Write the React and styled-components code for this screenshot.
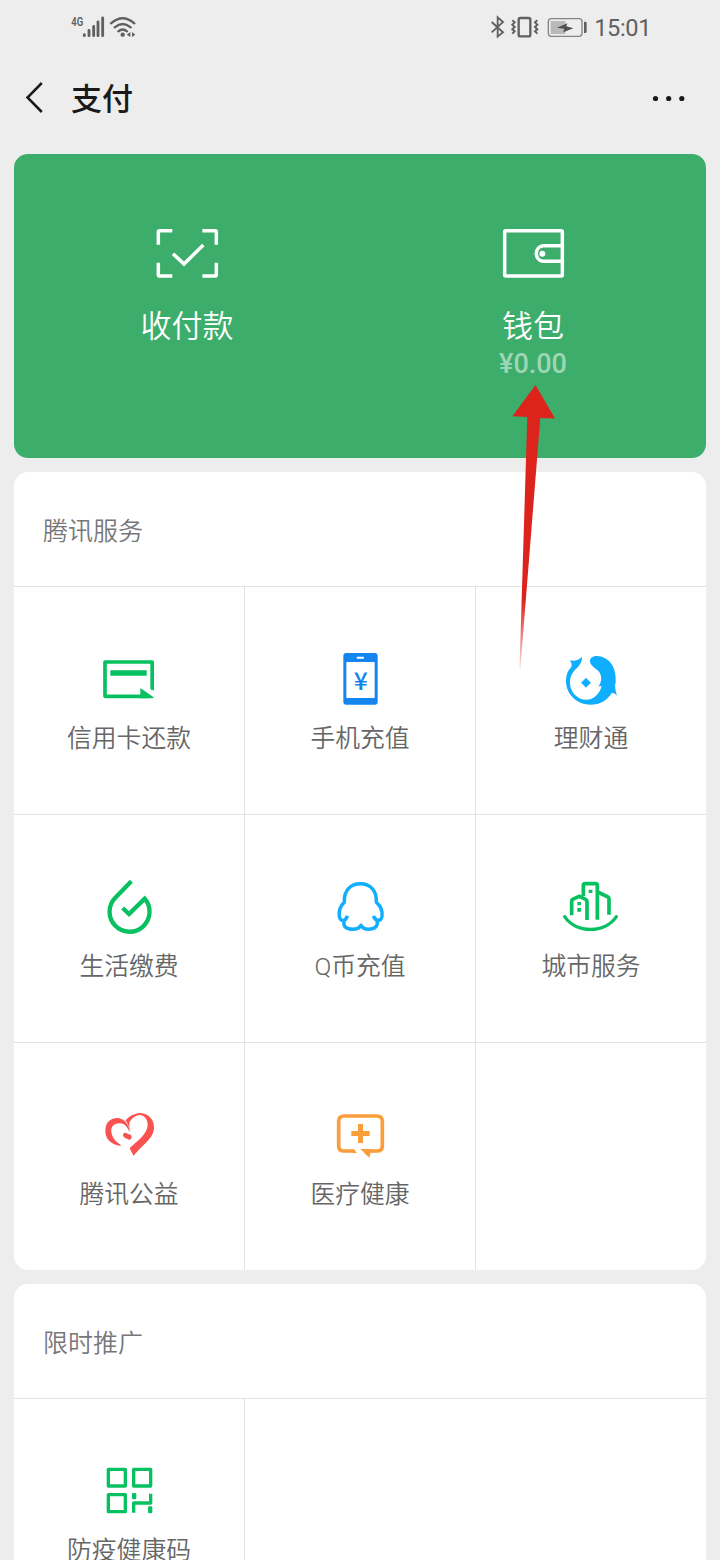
import React from "react";
import styled, { createGlobalStyle } from "styled-components";

const GlobalStyle = createGlobalStyle`
  * { box-sizing: border-box; }
  html, body { margin: 0; padding: 0; background: #ededed; }
  body { font-family: Roboto, "Noto Sans CJK SC", sans-serif; }
  svg { display: block; }
`;

const Screen = styled.div`
  position: relative;
  width: 720px;
  height: 1560px;
  overflow: hidden;
  background: #ededed;
`;

const StatusBar = styled.div`
  display: flex;
  align-items: center;
  justify-content: space-between;
  height: 56px;
  padding: 0 69px 0 70px;
  color: #606060;
`;

const StatusGroup = styled.div`
  display: flex;
  align-items: center;
`;

const Clock = styled.span`
  margin-left: 5px;
  font-size: 23.6px;
  line-height: 28px;
  letter-spacing: -0.4px;
`;

const NavBar = styled.header`
  display: flex;
  align-items: center;
  height: 84px;
  padding: 0 34px 0 24px;
`;

const Title = styled.h1`
  flex: 1;
  margin: 0 0 0 26px;
  padding-top: 3px;
  color: #191919;
  font-size: 31px;
  font-weight: 500;
  line-height: 40px;
`;

const Content = styled.main`
  display: flex;
  flex-direction: column;
  gap: 14px;
  padding: 14px 14px 0;
`;

const WalletPanel = styled.section`
  display: grid;
  grid-template-columns: 1fr 1fr;
  height: 304px;
  border-radius: 14px;
  background: #3dad6b;
`;

const WalletEntry = styled.div`
  display: flex;
  flex-direction: column;
  align-items: center;
  padding-top: 71px;
  color: #fff;
`;

const WalletLabel = styled.div`
  margin-top: 26px;
  font-size: 31px;
  font-weight: 350;
  line-height: 40px;
`;

const Amount = styled.div`
  margin-top: 0;
  color: #9ed6b5;
  font-size: 27px;
  font-weight: 500;
  line-height: 34px;
`;

const Card = styled.section`
  flex: none;
  overflow: hidden;
  border-radius: 14px;
  background: #fff;
`;

const CardTitle = styled.h2`
  display: flex;
  align-items: center;
  height: 115px;
  margin: 0;
  padding: 0 29px 1px;
  border-bottom: 1px solid #e3e3e3;
  color: #77777a;
  font-size: 25px;
  font-weight: 350;
`;

const Grid = styled.div`
  display: grid;
  grid-template-columns: 231px 231px 230px;
`;

const Cell = styled.div`
  display: flex;
  flex-direction: column;
  align-items: center;
  gap: 14px;
  height: ${(p) => (p.$bottom ? 228 : 227)}px;
  padding-top: 63px;
  border: 0 solid #e3e3e3;
  border-right-width: ${(p) => (p.$right ? 1 : 0)}px;
  border-bottom-width: ${(p) => (p.$bottom ? 1 : 0)}px;
`;

const CellLabel = styled.div`
  color: #666;
  font-size: 24.8px;
  font-weight: 350;
  line-height: 30px;
  white-space: nowrap;
`;

const Pointer = styled.svg`
  position: absolute;
  left: 505px;
  top: 380px;
`;

const GREEN = "#07c160";
const BLUE = "#10aeff";
const RED = "#fa5151";

const CellIcon = ({ box, children }) => (
  <svg width="60" height="60" viewBox={`${box} 180 180`} fill="none">
    {children}
  </svg>
);

const CreditCardIcon = () => (
  <CellIcon box="117 30">
    <path d="M276.500 151V66H135V169H262" stroke={GREEN} strokeWidth="11" strokeLinejoin="round" />
    <path d="M151 91H260V107H151ZM241 144L281 172L279 175H241Z" fill={GREEN} />
    <path d="M270 146L283 156V160L270 150Z" fill="#fff" />
  </CellIcon>
);

const PhoneIcon = () => (
  <CellIcon box="90 30">
    <rect x="130" y="39" width="103" height="155" rx="9" fill="#1485ee" />
    <rect x="139" y="66" width="85" height="108" fill="#fff" />
    <rect x="170" y="50" width="22" height="6" rx="2" fill="#fff" />
    <text x="182" y="150" textAnchor="middle" fontFamily="Noto Sans CJK SC" fontSize="74" fontWeight="500" fill="#1485ee">¥</text>
  </CellIcon>
);

const FundIcon = () => (
  <CellIcon box="783 30">
    <path
      d="M810 61Q831 66 846 50Q848 65 832 83C817 96 810 108 810 128C810 156 832 179 859 179C881 179 899 162 905 138L895 139C904 129 907 112 899 98C893 88 876 82 871 69C866 56 877 48 891 48C925 49 947 79 947 115Q948 126 945 137Q946 153 951 167Q944 158 936 158C922 181 899 194 872 194C832 194 798 164 798 123C798 104 804 91 814 81Q817 71 810 61Z"
      fill={BLUE}
    />
    <path d="M858 113Q865 121 873 128Q865 135 858 143Q851 135 843 128Q851 121 858 113Z" fill={BLUE} />
  </CellIcon>
);

const UtilitiesIcon = () => (
  <CellIcon box="117 24">
    <path d="M214 34L166 83A60 60 0 1 0 254 86L207 132L188 114" stroke={GREEN} strokeWidth="13" />
  </CellIcon>
);

const QCoinIcon = () => (
  <CellIcon box="810 24">
    <path
      d="M853 97C851 60 873 41 901 41C929 41 951 60 949 97C961 108 968 124 966 139C964 151 957 152 951 150C956 169 944 178 925 178C914 178 907 174 903 166C899 174 890 178 878 178C859 178 847 169 853 150C847 153 840 151 838 139C836 124 841 108 853 97ZM853 150Q859 148 862 137M951 150Q944 148 940 138"
      stroke={BLUE}
      strokeWidth="10.500"
      strokeLinejoin="round"
    />
  </CellIcon>
);

const CityIcon = () => (
  <CellIcon box="93 24">
    <path d="M104 140C138 191 225 191 259 140" stroke={GREEN} strokeWidth="10" strokeLinecap="round" />
    <path
      d="M125 136V93Q125 90 128 88L148 79L167 88Q171 90 171 94V150M160 78V46Q160 41 165 41H197Q202 41 202 46V149M203 66L234 81Q237 82 237 86V134"
      stroke={GREEN}
      strokeWidth="11"
    />
    <path d="M142 96h11v10h-11ZM142 114h11v11h-11ZM176 59h11v10h-11Z" fill={GREEN} />
  </CellIcon>
);

const CharityIcon = () => (
  <CellIcon box="117 18">
    <path
      d="M183 138C153 133 136 118 136 92C136 65 154 53 175 54C196 57 209 78 209 98C204 85 196 70 179 70C163 70 152 80 154 95C156 112 167 125 180 133Z"
      fill={RED}
    />
    <path
      d="M197 62C205 49 223 40 242 39C266 41 282 58 282 82C282 116 247 134 221 168L210 147V143C232 123 263 101 263 74C263 57 252 46 239 45Q217 50 208 69L209 96Q207 72 197 62Z"
      fill={RED}
    />
    <path d="M209 67Q216 51 237 46" stroke="#fff" strokeWidth="1.500" />
    <path d="M190 101Q195 96 203 101L213 105Q217 111 213 117Q208 122 201 116L192 112Q187 107 190 101Z" fill={RED} />
  </CellIcon>
);

const MedicalIcon = () => (
  <CellIcon box="810 18">
    <path d="M887 153H852Q836 153 836 137V64Q836 48 852 48H951Q967 48 967 64V137Q967 153 951 153H918" stroke="#fa9d3b" strokeWidth="11" />
    <path d="M875 147L892 159H875ZM899 147H935L928 173ZM894 72H909V93H929V108H909V129H894V108H874V93H894Z" fill="#fa9d3b" />
    <path d="M881 146L892 158H914L899 146Z" fill="#fff" />
  </CellIcon>
);

const HealthCodeIcon = () => (
  <CellIcon box="267 426">
    <path
      d="M295 448H346V498H295ZM371 448H422V498H371ZM295 524H346V575H295ZM371 578V549H422V521"
      stroke={GREEN}
      strokeWidth="10"
      strokeLinejoin="round"
    />
    <rect x="366" y="519" width="13" height="19" rx="4" fill={GREEN} />
    <rect x="414" y="559" width="13" height="21" rx="4" fill={GREEN} />
  </CellIcon>
);

const ScanIcon = () => (
  <svg width="66" height="56" viewBox="72 30 198 168" fill="none" stroke="#fff" strokeWidth="10.500">
    <path d="M127 47H89Q85 47 85 51V89M217 47H255Q259 47 259 51V89M85 143V179Q85 183 89 183H127M217 183H255Q259 183 259 179V143" />
    <path d="M129 116L162 147L220 90" />
  </svg>
);

const WalletIcon = () => (
  <svg width="66" height="56" viewBox="60 30 198 168" fill="none" stroke="#fff" strokeWidth="10.500">
    <rect x="74" y="47" width="173" height="136" rx="3" />
    <path d="M247 92H188A24 24 0 0 0 188 139H247" />
    <circle cx="187" cy="116" r="9" fill="#fff" stroke="none" />
  </svg>
);

const SignalIcons = () => (
  <svg width="70" height="32" viewBox="30 12 210 96" fill="none">
    <text x="34" y="53" fontFamily="Roboto" fontSize="37" fontWeight="600" fill="#606060" textLength="36" lengthAdjust="spacingAndGlyphs">4G</text>
    <path d="M73 80V83M87 67V83M101 55V83M114 42V83M128 30V83" stroke="#606060" strokeWidth="8.500" strokeLinecap="round" />
    <path d="M153 46Q188 15 223 46M164 58Q188 38 212 58M175 70Q188 59 201 70" stroke="#606060" strokeWidth="7" strokeLinecap="round" />
    <circle cx="188" cy="80" r="6.500" fill="#606060" />
    <path d="M211 72V87L200 80ZM216 72V87L226 80Z" fill="#606060" />
  </svg>
);

const DeviceIcons = () => (
  <svg width="100" height="32" viewBox="28 12 300 96" fill="none">
    <path d="M36 42L70 73L54 86V28L70 42L36 73" stroke="#606060" strokeWidth="5.500" />
    <rect x="117" y="30" width="35" height="55" rx="5" stroke="#606060" strokeWidth="7" />
    <path d="M98 37L105 43L98 50L105 57L98 64L105 70L98 77M173 37L166 43L173 50L166 57L173 64L166 70L173 77" stroke="#606060" strokeWidth="6" />
    <rect x="206" y="32" width="101" height="53" rx="9" stroke="#858585" strokeWidth="4" />
    <rect x="213" y="39" width="44" height="39" fill="#b9b9b9" />
    <path d="M313 41H317Q321 41 321 45V71Q321 75 317 75H313Z" fill="#606060" />
    <path d="M232 59L263 46L260 55L281 61L251 73L254 62Z" fill="#505050" />
  </svg>
);

const BackIcon = () => (
  <svg width="21" height="34" viewBox="0 0 21 34" fill="none">
    <path d="M17.800 2L3.500 16.500L17.800 31" stroke="#191919" strokeWidth="2.500" />
  </svg>
);

const MoreIcon = () => (
  <svg width="34" height="8" viewBox="0 0 34 8" fill="#191919">
    <circle cx="3.500" cy="4.500" r="2.600" />
    <circle cx="16.700" cy="4.500" r="2.600" />
    <circle cx="29.800" cy="4.500" r="2.600" />
  </svg>
);

const services = [
  { label: "信用卡还款", Icon: CreditCardIcon },
  { label: "手机充值", Icon: PhoneIcon },
  { label: "理财通", Icon: FundIcon },
  { label: "生活缴费", Icon: UtilitiesIcon },
  { label: "Q币充值", Icon: QCoinIcon },
  { label: "城市服务", Icon: CityIcon },
  { label: "腾讯公益", Icon: CharityIcon },
  { label: "医疗健康", Icon: MedicalIcon },
  null,
];

const promotions = [{ label: "防疫健康码", Icon: HealthCodeIcon }];

const ServiceCard = ({ title, items }) => (
  <Card>
    <CardTitle>{title}</CardTitle>
    <Grid>
      {items.map((item, i) => (
        <Cell key={i} $right={i % 3 !== 2} $bottom={i < items.length - 3}>
          {item && <item.Icon />}
          {item && <CellLabel>{item.label}</CellLabel>}
        </Cell>
      ))}
    </Grid>
  </Card>
);

export default function App() {
  return (
    <Screen>
      <GlobalStyle />
      <StatusBar>
        <StatusGroup>
          <SignalIcons />
        </StatusGroup>
        <StatusGroup>
          <DeviceIcons />
          <Clock>15:01</Clock>
        </StatusGroup>
      </StatusBar>
      <NavBar>
        <BackIcon />
        <Title>支付</Title>
        <MoreIcon />
      </NavBar>
      <Content>
        <WalletPanel>
          <WalletEntry>
            <ScanIcon />
            <WalletLabel>收付款</WalletLabel>
          </WalletEntry>
          <WalletEntry>
            <WalletIcon />
            <WalletLabel>钱包</WalletLabel>
            <Amount>¥0.00</Amount>
          </WalletEntry>
        </WalletPanel>
        <ServiceCard title="腾讯服务" items={services} />
        <ServiceCard title="限时推广" items={promotions} />
      </Content>
      <Pointer width="60" height="295" viewBox="505 380 60 295">
        <defs>
          <linearGradient id="tail" gradientUnits="userSpaceOnUse" x1="0" y1="600" x2="0" y2="669">
            <stop offset="0" stopColor="#dc241c" />
            <stop offset="1" stopColor="#dc241c" stopOpacity="0.15" />
          </linearGradient>
        </defs>
        <path d="M535.500 385L555 418.500L540.300 418L520.300 669H519.500L527.300 417L512.300 416.300Z" fill="url(#tail)" />
      </Pointer>
    </Screen>
  );
}
